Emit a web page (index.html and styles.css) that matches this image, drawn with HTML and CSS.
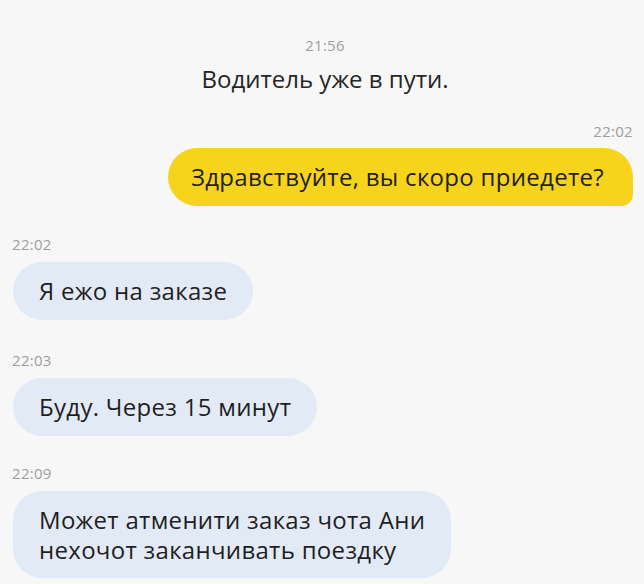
FILE: index.html
```html
<!DOCTYPE html>
<html lang="ru">
<head>
<meta charset="UTF-8">
<meta name="viewport" content="width=device-width, initial-scale=1.0">
<title>Чат с водителем</title>
<link rel="stylesheet" href="styles.css">
</head>
<body>
<div class="chat">
  <div class="system">
    <div class="time">21:56</div>
    <p class="system-text">Водитель уже в пути.</p>
  </div>

  <div class="msg out">
    <div class="time">22:02</div>
    <div class="bubble">Здравствуйте, вы скоро приедете?</div>
  </div>

  <div class="msg in">
    <div class="time">22:02</div>
    <div class="bubble">Я ежо на заказе</div>
  </div>

  <div class="msg in">
    <div class="time">22:03</div>
    <div class="bubble">Буду. Через 15 минут</div>
  </div>

  <div class="msg in last">
    <div class="time">22:09</div>
    <div class="bubble">Может атменити заказ чота Ани<br>нехочот заканчивать поездку</div>
  </div>
</div>
</body>
</html>
```

FILE: styles.css
```css
* {
  padding: 0;
  margin: 0;
  box-sizing: border-box;
  font-family: "Open Sans", "Noto Sans", sans-serif;
}
body {
  background-color: #f7f7f7;
  color: #1f1f1f;
}
.chat {
  display: flex;
  flex-direction: column;
  padding: 35px 11px 0 13px;
}
.time {
  font-size: 15px;
  color: #9d9d9d;
  line-height: 20px;
  letter-spacing: 0.3px;
}
.system {
  text-align: center;
  margin-left: 4px;
}
.system-text {
  font-size: 24px;
  line-height: 30px;
  margin-top: 9px;
  color: #262626;
}
.msg {
  display: flex;
  flex-direction: column;
}
.msg .bubble {
  font-size: 24px;
  line-height: 30px;
  letter-spacing: 0.3px;
  padding: 14px 26px;
  border-radius: 29px;
}
.out {
  align-items: flex-end;
  margin-top: 27px;
}
.out .time {
  margin-bottom: 7px;
}
.out .bubble {
  background-color: #f6d41c;
  border-radius: 29px 29px 12px 29px;
  padding-left: 23px;
  padding-right: 29px;
}
.in {
  align-items: flex-start;
  margin-top: 28px;
}
.in + .in {
  margin-top: 30px;
}
.in.last {
  margin-top: 27px;
}
.in .time {
  margin-left: -1px;
  margin-bottom: 8px;
}
.in .bubble {
  background-color: #e2ebf5;
}
.last .bubble {
  padding-bottom: 13px;
}
```
